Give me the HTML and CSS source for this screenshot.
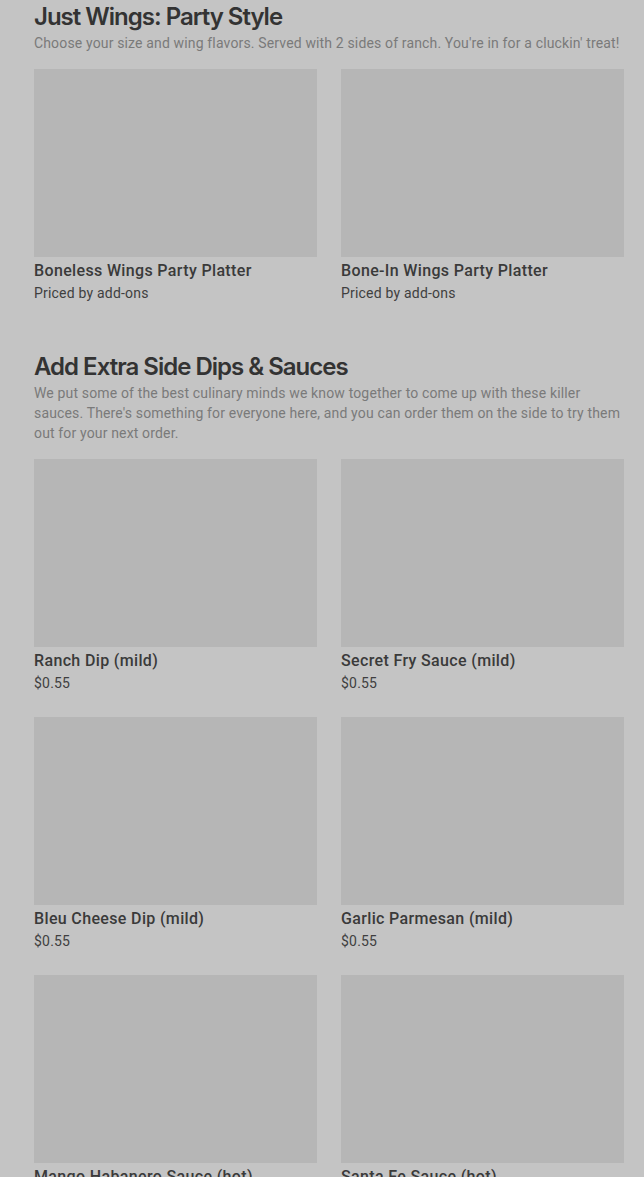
FILE: index.html
```html
<!DOCTYPE html>
<html lang="en">
<head>
  <meta charset="UTF-8">
  <title>Just Wings - Menu</title>
  <link rel="stylesheet" href="styles.css">
</head>
<body>

  <section class="menu-section first">
    <h2>Just Wings: Party Style</h2>
    <p class="section-desc">Choose your size and wing flavors. Served with 2 sides of ranch. You're in for a cluckin' treat!</p>
    <div class="item-grid">
      <div class="item">
        <div class="item-img"></div>
        <h3>Boneless Wings Party Platter</h3>
        <p class="price">Priced by add-ons</p>
      </div>
      <div class="item">
        <div class="item-img"></div>
        <h3>Bone-In Wings Party Platter</h3>
        <p class="price">Priced by add-ons</p>
      </div>
    </div>
  </section>

  <section class="menu-section">
    <h2>Add Extra Side Dips &amp; Sauces</h2>
    <p class="section-desc">We put some of the best culinary minds we know together to come up with these killer sauces. There's something for everyone here, and you can order them on the side to try them out for your next order.</p>
    <div class="item-grid">
      <div class="item">
        <div class="item-img"></div>
        <h3>Ranch Dip (mild)</h3>
        <p class="price">$0.55</p>
      </div>
      <div class="item">
        <div class="item-img"></div>
        <h3>Secret Fry Sauce (mild)</h3>
        <p class="price">$0.55</p>
      </div>
      <div class="item">
        <div class="item-img"></div>
        <h3>Bleu Cheese Dip (mild)</h3>
        <p class="price">$0.55</p>
      </div>
      <div class="item">
        <div class="item-img"></div>
        <h3>Garlic Parmesan (mild)</h3>
        <p class="price">$0.55</p>
      </div>
      <div class="item">
        <div class="item-img"></div>
        <h3>Mango Habanero Sauce (hot)</h3>
        <p class="price">$0.55</p>
      </div>
      <div class="item">
        <div class="item-img"></div>
        <h3>Santa Fe Sauce (hot)</h3>
        <p class="price">$0.55</p>
      </div>
    </div>
  </section>

</body>
</html>
```

FILE: styles.css
```css
* {
  margin: 0; padding: 0; box-sizing: border-box;
}

body {
  font-family: 'Roboto', sans-serif;
  background: #c4c4c4;
  color: #333;
  padding: 1px 20px 0 34px;
  overflow: hidden;
}

.menu-section {
  margin-bottom: 48px;
}

.menu-section h2 {
  font-family: 'Inter', sans-serif;
  font-size: 24px;
  font-weight: 600;
  line-height: 32px;
  letter-spacing: -1px;
  color: #333;
}

.section-desc {
  font-size: 14px;
  line-height: 20px;
  letter-spacing: 0.15px;
  color: #7a7a7a;
}

.item-grid {
  display: grid;
  grid-template-columns: 1fr 1fr;
  column-gap: 24px;
  row-gap: 24px;
  margin-top: 16px;
}

.item-img {
  height: 188px;
  background: #b6b6b6;
}

.item h3 {
  padding-top: 2px;
  font-size: 16px;
  font-weight: 500;
  line-height: 24px;
  letter-spacing: 0.35px;
  color: #3a3a3a;
}

.item .price {
  font-size: 14px;
  line-height: 20px;
  letter-spacing: 0.2px;
  color: #3f3f3f;
}
```
